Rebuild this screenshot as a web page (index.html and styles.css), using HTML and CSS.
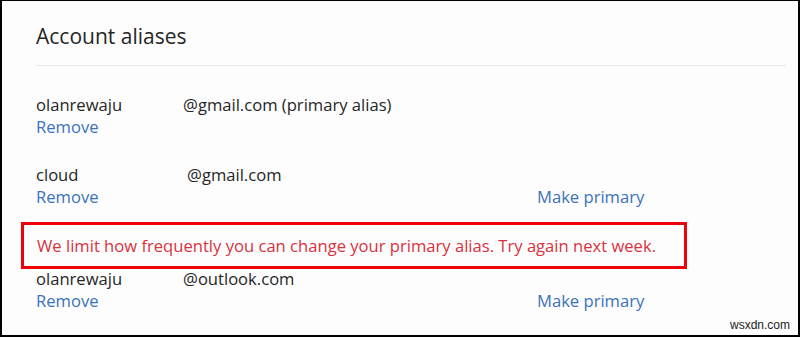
FILE: index.html
```html
<!DOCTYPE html>
<html lang="en">
<head>
    <meta charset="UTF-8">
    <meta name="viewport" content="width=device-width, initial-scale=1.0">
    <title>Account aliases</title>
    <link rel="stylesheet" href="styles.css">
</head>
<body>
    <div class="frame">
        <div class="panel">
            <h2>Account aliases</h2>
            <div class="aliases">
                <div class="alias">
                    <span class="name">olanrewaju</span>
                    <span class="domain">@gmail.com (primary alias)</span>
                    <a href="#" class="link">Remove</a>
                </div>
                <div class="alias">
                    <span class="name">cloud</span>
                    <span class="domain shift">@gmail.com</span>
                    <a href="#" class="link">Remove</a>
                    <a href="#" class="link primary">Make primary</a>
                </div>
                <div class="message">We limit how frequently you can change your primary alias. Try again next week.</div>
                <div class="alias last">
                    <span class="name">olanrewaju</span>
                    <span class="domain">@outlook.com</span>
                    <a href="#" class="link">Remove</a>
                    <a href="#" class="link primary">Make primary</a>
                </div>
            </div>
        </div>
        <span class="watermark">wsxdn.com</span>
    </div>
</body>
</html>
```

FILE: styles.css
```css
body {
    margin: 0;
    padding: 0;
    background-color: #ffffff;
    font-family: "Open Sans", "Noto Sans", Arial, sans-serif;
    color: #262626;
}
.frame {
    position: relative;
    width: 800px;
    height: 337px;
    box-sizing: border-box;
    border-top: 1px solid #000;
    border-left: 2px solid #000;
    border-right: 2px solid #000;
    border-bottom: 2px solid #000;
    background-color: #fdfdfd;
    overflow: hidden;
}
.panel {
    padding: 18px 12px 0 34px;
}
h2 {
    margin: 0;
    font-size: 21px;
    font-weight: normal;
    line-height: 34px;
    color: #262626;
    padding-bottom: 12px;
    border-bottom: 1px solid #e8e8e8;
}
.aliases {
    padding-top: 28px;
}
.alias {
    display: grid;
    grid-template-columns: 147px 354px auto;
    font-size: 16.6px;
    line-height: 22px;
    margin-bottom: 26px;
}
.alias .name {
    grid-column: 1;
}
.alias .domain {
    grid-column: 2 / 4;
}
.alias .shift {
    padding-left: 4px;
}
.link {
    color: #3a72bd;
    text-decoration: none;
    grid-row: 2;
}
.link.primary {
    grid-column: 3;
}
.message {
    width: 634px;
    margin: -12px 0 0 -15px;
    padding: 10px 13px 10px 13px;
    border: 3px solid #f00008;
    color: #d9323e;
    font-size: 16.6px;
    line-height: 21px;
}
.alias.last {
    margin-top: -1px;
    margin-bottom: 0;
}
.watermark {
    position: absolute;
    right: 8px;
    bottom: 3px;
    font-family: "Liberation Sans", Arial, sans-serif;
    font-size: 12px;
    color: #222;
}
```
